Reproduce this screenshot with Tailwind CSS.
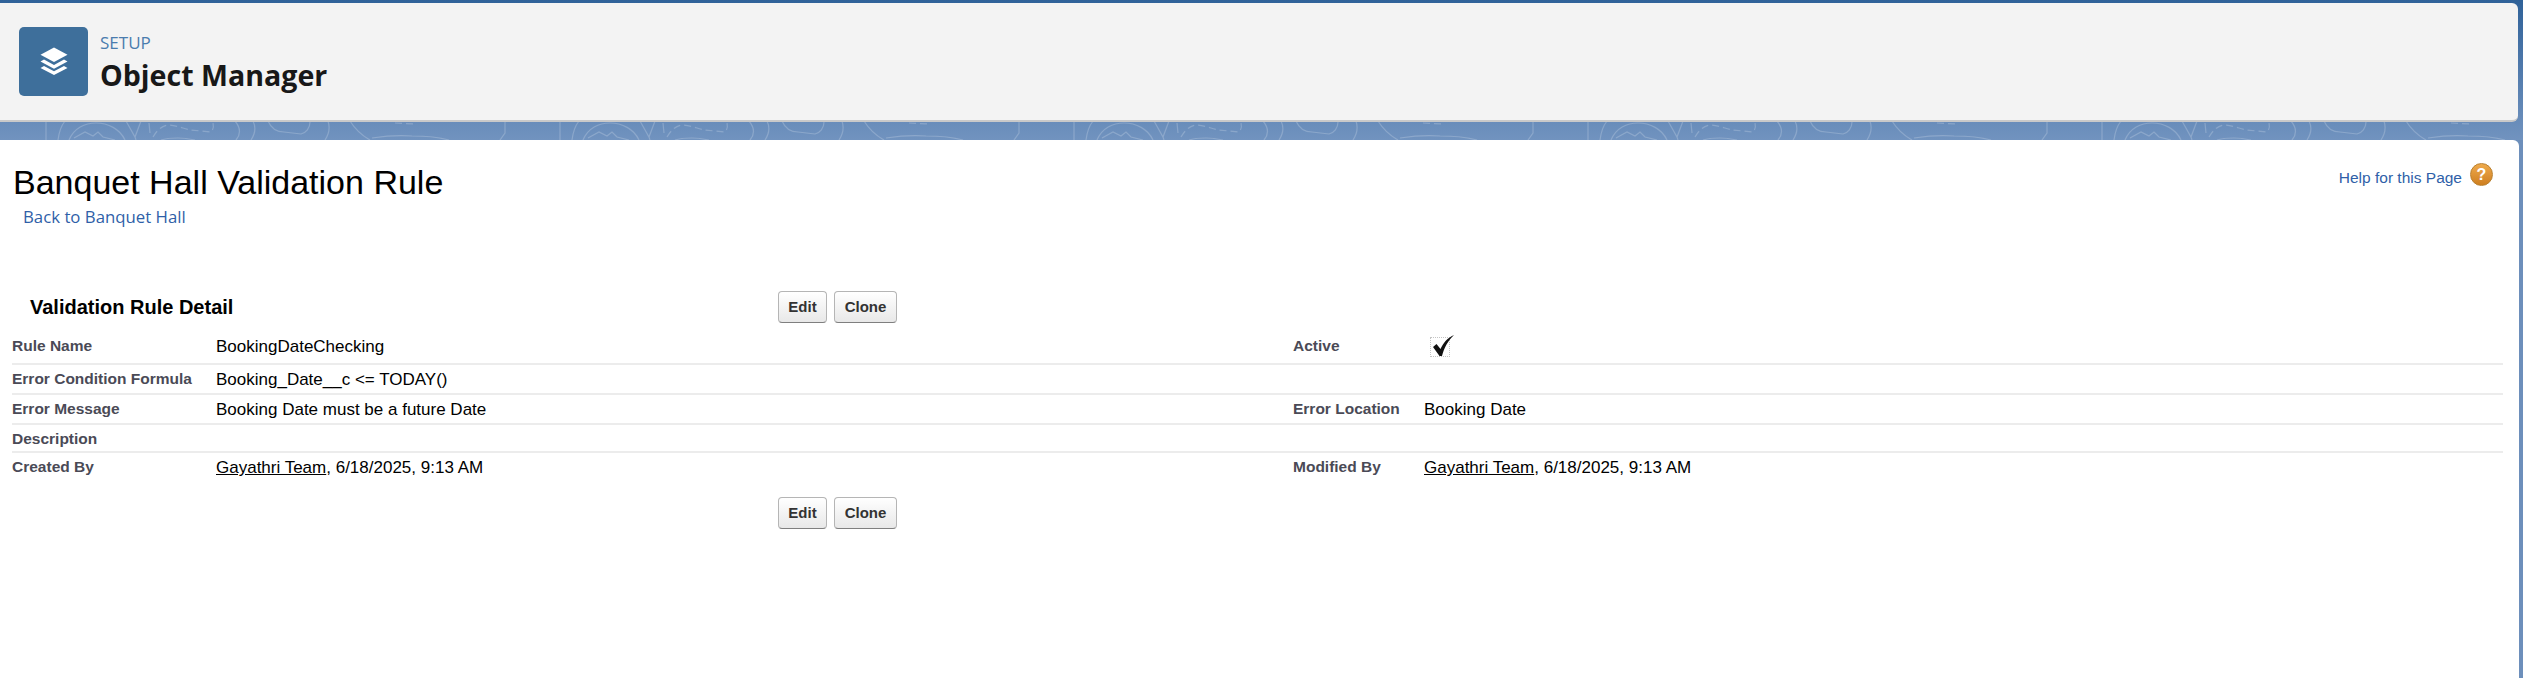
<!DOCTYPE html>
<html lang="en">
<head>
<meta charset="UTF-8">
<title>Banquet Hall Validation Rule</title>
<script src="https://cdn.jsdelivr.net/npm/@tailwindcss/browser@4"></script>
</head>
<body class="relative h-[678px] w-[2523px] overflow-hidden bg-[#6d8fbb] font-['Liberation_Sans',sans-serif]">
  <!-- background -->
  <div class="absolute inset-x-0 top-0 h-[140px] bg-gradient-to-b from-[#2f6299] to-[#7193bf]"></div>
  <svg class="absolute left-0 top-0" width="2523" height="140" fill="none">
    <defs>
      <pattern id="swirl" width="514" height="140" patternUnits="userSpaceOnUse">
        <g stroke="#ffffff" stroke-opacity="0.2" stroke-width="1.2" fill="none">
          <path d="M46 122V140"/>
          <path d="M58 140C59 132 61 126 65 121"/>
          <path d="M69 140C74 128 85 123 96 123C108 123 120 129 125 140"/>
          <path d="M74 138 85 132 93 136 98 132 103 137 115 140"/>
          <path d="M126 121 135 137 141 121M135 137 136 140"/>
          <path d="M149 123 150 133"/>
          <path d="M153 137C157 130 162 126 168 125C176 125 184 129 191 130L211 132C213 130 214 127 213 123" stroke-dasharray="7 4"/>
          <path d="M161 140C167 138 172 138 178 138C184 138 190 139 195 140"/>
          <path d="M235 121C240 127 241 134 236 140"/>
          <path d="M253 121C256 127 255 134 251 140"/>
          <path d="M268 121C271 128 276 132 284 132L301 134C306 133 310 128 310 122"/>
          <path d="M328 121C330 127 329 134 325 140"/>
          <path d="M350 121C355 129 361 135 370 140"/>
          <path d="M372 138C385 136 400 135 412 136C425 136 438 137 449 140"/>
          <path d="M395 123 415 124" stroke-dasharray="7 4"/>
          <path d="M505 121V133L500 140"/>
        </g>
      </pattern>
    </defs>
    <rect width="2523" height="140" fill="url(#swirl)"/>
  </svg>

  <div class="relative">
    <!-- object manager header -->
    <header class="mt-[3px] flex h-[119px] w-[2518px] items-center gap-[12px] rounded-r-[6px] border-b-2 border-[#c9c9c9] bg-[#f3f3f3] pl-[19px] pb-[1px]">
      <div class="flex size-[69px] items-center justify-center rounded-[5px] bg-[#3e6f9b]">
        <svg width="30" height="30" viewBox="0 0 30 30" fill="#ffffff">
          <path d="M15 1.500 28.500 8.800 15 16 1.500 8.800Z"/>
          <path d="M5 13.600 15 19l10-5.400 3.500 2-13.500 7.200-13.500-7.200Z"/>
          <path d="M5 20 15 25.300 25 20l3.500 2-13.500 7-13.500-7Z"/>
        </svg>
      </div>
      <div class="pt-[2px] font-['Open_Sans',sans-serif]">
        <div class="text-[17px] leading-[26px] text-[#4a7cae]">SETUP</div>
        <div class="text-[28.6px] leading-[38px] font-bold text-[#181818]">Object Manager</div>
      </div>
    </header>

    <!-- page -->
    <main class="mt-[18px] h-[540px] w-[2519px] rounded-tr-[6px] bg-white pt-[21px] pl-[13px] pr-[12px]">
      <div class="flex items-start justify-between">
        <div>
          <h1 class="text-[34px] leading-[42px] text-black">Banquet Hall Validation Rule</h1>
          <a class="mt-[2px] ml-[10px] block font-['Open_Sans',sans-serif] text-[16.8px] leading-[24px] text-[#2f5fa8]">Back to Banquet Hall</a>
        </div>
        <div class="mt-[2px] mr-[14px] flex items-start gap-[8px]">
          <a class="mt-[3px] text-[15.5px] leading-[24px] text-[#2f5fa8]">Help for this Page</a>
          <span class="flex size-[23px] items-center justify-center rounded-full border border-[#b9802f] bg-gradient-to-b from-[#eeaa4c] to-[#cf7f1e] text-[16px] font-bold text-white">?</span>
        </div>
      </div>

      <!-- detail block -->
      <div class="mt-[62px]">
        <div class="flex h-[32px] items-center">
          <h2 class="w-[765px] pl-[17px] text-[20px] font-bold text-black">Validation Rule Detail</h2>
          <div class="flex gap-[7px]">
            <button class="h-[32px] w-[49px] rounded-[4px] border border-[#b5b5b5] border-b-[#7f7f7f] bg-gradient-to-b from-white to-[#e8e8e8] text-[15px] font-bold text-[#333]">Edit</button>
            <button class="h-[32px] w-[63px] rounded-[4px] border border-[#b5b5b5] border-b-[#7f7f7f] bg-gradient-to-b from-white to-[#e8e8e8] text-[15px] font-bold text-[#333]">Clone</button>
          </div>
        </div>

        <div class="mt-[10px] -ml-[1px] w-[2491px] text-[17px] text-black">
          <div class="grid h-[32px] grid-cols-[204px_1077px_131px_1fr] items-center border-b-2 border-[#ececec] pb-[2px]">
            <div class="-mt-[2px] text-[15.5px] font-bold text-[#4a4a56]">Rule Name</div>
            <div>BookingDateChecking</div>
            <div class="-mt-[2px] text-[15.5px] font-bold text-[#4a4a56]">Active</div>
            <div class="pl-[6px]">
              <span class="flex size-[20px] items-center justify-center border border-dotted border-[#c4c4c4] bg-white">
                <svg width="24" height="24" viewBox="0 0 24 24" class="-mt-[5px] ml-[6px] shrink-0"><path d="M2 14 5.500 11 9.500 16C12 10.500 16 5 23 2 17 7.500 13 15 11 23H8.500Z" fill="#111111"/></svg>
              </span>
            </div>
          </div>
          <div class="grid h-[30px] grid-cols-[204px_1fr] items-center border-b-2 border-[#ececec] pt-[2px]">
            <div class="-mt-[2px] text-[15.5px] font-bold text-[#4a4a56]">Error Condition Formula</div>
            <div>Booking_Date__c &lt;= TODAY()</div>
          </div>
          <div class="grid h-[30px] grid-cols-[204px_1077px_131px_1fr] items-center border-b-2 border-[#ececec] pt-[2px]">
            <div class="-mt-[2px] text-[15.5px] font-bold text-[#4a4a56]">Error Message</div>
            <div>Booking Date must be a future Date</div>
            <div class="-mt-[2px] text-[15.5px] font-bold text-[#4a4a56]">Error Location</div>
            <div>Booking Date</div>
          </div>
          <div class="grid h-[28px] grid-cols-[204px_1fr] items-center border-b-2 border-[#ececec] pt-[2px]">
            <div class="text-[15.5px] font-bold text-[#4a4a56]">Description</div>
            <div></div>
          </div>
          <div class="grid h-[30px] grid-cols-[204px_1077px_131px_1fr] items-center">
            <div class="-mt-[2px] text-[15.5px] font-bold text-[#4a4a56]">Created By</div>
            <div><span class="underline">Gayathri Team</span>, 6/18/2025, 9:13 AM</div>
            <div class="-mt-[2px] text-[15.5px] font-bold text-[#4a4a56]">Modified By</div>
            <div><span class="underline">Gayathri Team</span>, 6/18/2025, 9:13 AM</div>
          </div>
        </div>

        <div class="mt-[14px] flex gap-[7px] pl-[765px]">
          <button class="h-[32px] w-[49px] rounded-[4px] border border-[#b5b5b5] border-b-[#7f7f7f] bg-gradient-to-b from-white to-[#e8e8e8] text-[15px] font-bold text-[#333]">Edit</button>
          <button class="h-[32px] w-[63px] rounded-[4px] border border-[#b5b5b5] border-b-[#7f7f7f] bg-gradient-to-b from-white to-[#e8e8e8] text-[15px] font-bold text-[#333]">Clone</button>
        </div>
      </div>
    </main>
  </div>
</body>
</html>
